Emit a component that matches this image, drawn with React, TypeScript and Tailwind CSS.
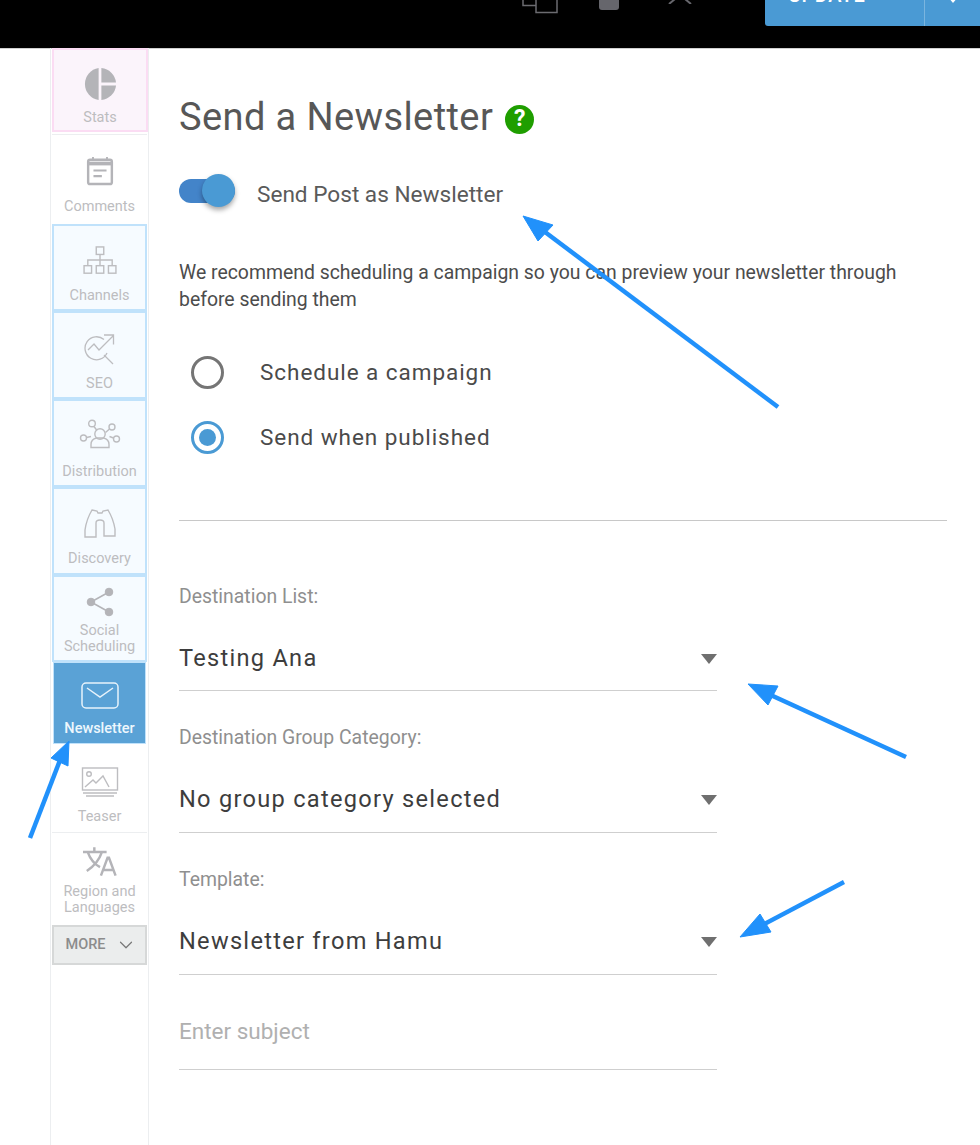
import { FunctionComponent, ReactNode } from 'react'
import { ChevronDown } from 'lucide-react'

const font = { fontFamily: 'Roboto, sans-serif' }

const StatsIcon = () => (
  <svg width="34" height="34" viewBox="0 0 34 34" fill="#b4b4b8">
    <path d="M15.6 1 A16.2 16.2 0 0 0 15.6 33 Z" />
    <path d="M18.4 1 A16.2 16.2 0 0 1 33 15.6 H18.4 Z" />
    <path d="M18.4 18.4 H33 A16.2 16.2 0 0 1 18.4 33 Z" />
  </svg>
)

const CommentsIcon = () => (
  <svg width="28" height="30" viewBox="0 0 30 32" fill="none" stroke="#b4b4b8" strokeWidth="2.6">
    <rect x="2.3" y="4" width="25.4" height="26" rx="2" />
    <path d="M2 8h26" strokeWidth="4" />
    <path d="M7.5 1v4M22.5 1v4" strokeWidth="2" />
    <path d="M8 15.5h14M8 21.5h9" strokeWidth="2.2" />
  </svg>
)

const ChannelsIcon = () => (
  <svg width="34" height="30" viewBox="0 0 36 32" fill="none" stroke="#bdbdc0" strokeWidth="1.5">
    <rect x="14" y="1" width="8" height="8" />
    <rect x="1" y="21" width="8" height="8" />
    <rect x="14" y="21" width="8" height="8" />
    <rect x="27" y="21" width="8" height="8" />
    <path d="M18 9v12M5 21v-6h26v6" />
  </svg>
)

const SeoIcon = () => (
  <svg width="32" height="32" viewBox="0 0 32 32" fill="none" stroke="#bdbdc0" strokeWidth="1.3">
    <path d="M20 6.500A11.500 11.500 0 1 0 23 20" />
    <path d="M4 17l6-6 5 6L29 3M20 2h9.500v9.500" />
    <path d="M20 22l9 9" />
  </svg>
)

const DistributionIcon = () => (
  <svg width="42" height="30" viewBox="0 0 42 30" fill="none" stroke="#bdbdc0" strokeWidth="1.4">
    <circle cx="13" cy="4.5" r="3.3" />
    <circle cx="33" cy="8" r="3" />
    <circle cx="4.5" cy="19" r="3" />
    <circle cx="37.5" cy="20" r="3" />
    <circle cx="21" cy="15" r="5.2" />
    <path d="M12 28.5v-3c0-4 3-6 5.5-6.5h7c2.5.5 5.5 2.5 5.5 6.500v3zM15 7.500l3 4M30.500 10l-4 3.500M7.500 18.500l4.500-1M34.500 19l-4-1.500" />
  </svg>
)

const DiscoveryIcon = () => (
  <svg width="34" height="30" viewBox="0 0 34 30" fill="none" stroke="#bdbdc0" strokeWidth="1.4">
    <path d="M9 1l5 1 1 2h4l1-2 5-1c3 5 6 13 7 19v7H21V14c0-2-1-3-4-3s-4 1-4 3v14H2v-7C3 14 6 6 9 1z" />
  </svg>
)

const ShareIcon = () => (
  <svg width="28" height="30" viewBox="0 0 28 30" fill="#b4b4b8" stroke="#b4b4b8">
    <circle cx="23" cy="5" r="3.800" />
    <circle cx="5" cy="15" r="3.800" />
    <circle cx="23" cy="25" r="3.800" />
    <path d="M23 5L5 15l18 10" fill="none" strokeWidth="1.600" />
  </svg>
)

const MailIcon = () => (
  <svg width="38" height="27" viewBox="0 0 38 27" fill="none" stroke="#e8f3fb" strokeWidth="1.500">
    <rect x="1" y="1" width="36" height="25" rx="4" />
    <path d="M6 6l13 9 13-9" />
  </svg>
)

const TeaserIcon = () => (
  <svg width="38" height="30" viewBox="0 0 38 30" fill="none" stroke="#bdbdc0" strokeWidth="1.400">
    <rect x="1.500" y="1" width="35" height="22" />
    <circle cx="8" cy="7" r="2.300" />
    <path d="M4 20l8-7 3 3 7-7 6 11M2 26h34M5 29h28" />
  </svg>
)

const TranslateIcon = () => (
  <svg width="34" height="31" viewBox="0 0 36 32" fill="none" stroke="#b4b4b8" strokeWidth="2.600">
    <path d="M0 6h25M12 1v5M5 6q4 11 13 16M20 6q-4 12-16 20" />
    <path d="M19 31l7-19h1.500l7 19M21.500 25h11" />
  </svg>
)

const SideItem: FunctionComponent<{
  icon: ReactNode
  label: ReactNode
  box: string
  gap?: string
  text?: string
}> = ({ icon, label, box, gap = 'mt-[9px]', text = 'text-[#bdbdbf]' }) => (
  <div className={`flex flex-col items-center ${box}`}>
    <div className="h-[36px] flex items-center justify-center">{icon}</div>
    <div className={`text-[14.500px] leading-[16px] text-center ${gap} ${text}`}>{label}</div>
  </div>
)

const blue = 'border-2 border-[#c0e2fb] bg-[#f6fbff] mx-[1px]'

const Sidebar = () => (
  <aside className="ml-[50px] w-[99px] border-x border-[#eceef0] shrink-0">
    <SideItem icon={<StatsIcon />} label="Stats" gap="mt-[8px]" box="h-[84px] pt-[16px] border-2 border-[#fbdcf3] bg-[#fbf4fb] ml-[1px] mb-[2px]" />
    <SideItem icon={<CommentsIcon />} label="Comments" gap="mt-[10px]" box="h-[90px] pt-[18px] border-t border-[#eceef0] mx-[1px]" />
    <SideItem icon={<ChannelsIcon />} label="Channels" box={`h-[87px] pt-[17px] ${blue}`} />
    <SideItem icon={<SeoIcon />} label="SEO" box={`h-[88px] pt-[18px] ${blue}`} />
    <SideItem icon={<DistributionIcon />} label="Distribution" gap="mt-[12px]" box={`h-[88px] pt-[15px] ${blue}`} />
    <SideItem icon={<DiscoveryIcon />} label="Discovery" box={`h-[88px] pt-[17px] ${blue}`} />
    <SideItem
      icon={<ShareIcon />}
      label={<>Social<br />Scheduling</>}
      gap="mt-[3px]"
      box={`h-[87px] pt-[7px] ${blue}`}
    />
    <SideItem
      icon={<MailIcon />}
      label="Newsletter"
      gap="mt-[8px]"
      box="h-[82px] pt-[14px] bg-[#5aa2d6] border border-[#c0e2fb] mx-[2px] font-medium"
      text="text-[#eef7fd]"
    />
    <SideItem icon={<TeaserIcon />} label="Teaser" box="h-[89px] pt-[20px] border-b border-[#eceef0] mx-[1px]" />
    <div className="h-[92px] flex flex-col items-center text-[#bdbdbf] pt-[13px]">
      <TranslateIcon />
      <div className="text-[14.500px] leading-[16px] text-center mt-[7px]">Region and<br />Languages</div>
    </div>
    <div className="h-[40px] border-2 border-[#d6d8d8] bg-[#ebeded] mx-[1px] pl-[3px] flex items-center justify-center gap-[9px] text-[#8c8c8c] text-[14.500px] font-medium">
      MORE
      <ChevronDown size={22} strokeWidth={1.300} color="#777" />
    </div>
  </aside>
)

const SelectField: FunctionComponent<{ label: string; value: string; top: string; box: string }> = ({ label, value, top, box }) => (
  <div className={`w-[538px] ${top}`}>
    <div className="text-[19.400px] leading-[20px] text-[#8f8f8f]">{label}</div>
    <div className={`flex items-center justify-between border-b border-[#cfcfcf] pb-[4px] ${box}`}>
      <span className="text-[23.600px] tracking-[1.280px] text-[#3d3d3d]">{value}</span>
      <span className="w-0 h-0 border-x-[8px] border-x-transparent border-t-[10px] border-t-[#6f6f6f]" />
    </div>
  </div>
)

const Radio: FunctionComponent<{ checked?: boolean; label: string }> = ({ checked, label }) => (
  <div className="flex items-center h-[33px] pl-[12px]">
    <span className={`w-[33px] h-[33px] rounded-full border-[3.500px] flex items-center justify-center ${checked ? 'border-[#4a9ad4]' : 'border-[#757575]'}`}>
      {checked && <span className="w-[17px] h-[17px] rounded-full bg-[#4a9ad4]" />}
    </span>
    <span className="ml-[36px] text-[22.500px] tracking-[0.950px] text-[#4a4a4a]">{label}</span>
  </div>
)

const Arrows = () => (
  <svg className="absolute left-0 top-0 pointer-events-none" width="980" height="1145" fill="#2191fb" stroke="#2191fb">
    <path d="M778 407L537 226" strokeWidth="4.500" />
    <path d="M523 216L553 225L538 241Z" />
    <path d="M906 757L762 691" strokeWidth="4.500" />
    <path d="M748 684L778 686L768 705Z" />
    <path d="M844 882L755 929" strokeWidth="4.500" />
    <path d="M740 937L760 914L771 932Z" />
    <path d="M30 838L62 755" strokeWidth="4.500" />
    <path d="M69 741L68 766L51 758Z" />
  </svg>
)

// window controls are cut off by the top edge of the screenshot
const TopIcons = () => (
  <>
    <svg className="mb-[12px]" width="36" height="15" viewBox="0 0 36 15" fill="none" stroke="#6b6b70" strokeWidth="1.500">
      <path d="M1 -5V6.500H14" />
      <path d="M14 -5V13.500H35V-5" />
    </svg>
    <svg className="ml-[41px] mb-[16px]" width="20" height="11" viewBox="0 0 20 11" fill="#66666c">
      <path d="M0 0H20V8a3 3 0 0 1-3 3H3a3 3 0 0 1-3-3Z" />
    </svg>
    <svg className="ml-[49px] mr-[73px] mb-[22px]" width="24" height="5" viewBox="0 0 24 5" fill="none" stroke="#66666c" strokeWidth="2">
      <path d="M7 0L1 5M17 0l6 5" />
    </svg>
  </>
)

export default function App() {
  return (
    <div className="relative w-[980px] h-[1145px] overflow-hidden bg-white" style={font}>
      <header className="h-[48px] bg-black shadow-[0_1px_0_#d0d0d0] flex items-end justify-end pb-[22px] overflow-hidden">
        <TopIcons />
        <div className="flex h-[60px] w-[215px] shrink-0 bg-[#4a9ad4] rounded-bl-[3px] text-white">
          <div className="w-[160px] pl-[23px] text-[20px] font-medium tracking-[0.500px] pt-[19px] leading-[20px] border-r border-[#7ab5df]">UPDATE</div>
          <div className="flex-1 flex justify-center items-end pb-[23px]">
            <span className="w-0 h-0 border-x-[5px] border-x-transparent border-t-[6px] border-t-white" />
          </div>
        </div>
      </header>
      <div className="flex h-[1097px]">
        <Sidebar />
        <main className="ml-[30px] flex-1 pr-[33px]">
          <div className="flex items-center mt-[43px] h-[52px]">
            <h1 className="text-[38px] tracking-[0.400px] text-[#575757]">Send a Newsletter</h1>
            <span className="ml-[12px] mt-[4px] w-[29px] h-[29px] rounded-full bg-[#1f9e00] text-white text-[23px] font-bold flex items-center justify-center">?</span>
          </div>
          <div className="flex items-center mt-[30px] h-[36px]">
            <div className="relative w-[56px] h-[24px] rounded-full bg-[#4384c9]">
              <span className="absolute right-0 top-[-5px] w-[33px] h-[33px] rounded-full bg-[#4a9ad4] shadow-[0_3px_5px_rgba(0,0,0,0.35)]" />
            </div>
            <span className="ml-[22px] mt-[8px] text-[22.600px] text-[#5a5a5a]">Send Post as Newsletter</span>
          </div>
          <p className="mt-[50px] text-[19.400px] leading-[27px] text-[#4c4c4c] w-[730px]">
            We recommend scheduling a campaign so you can preview your newsletter through before sending them
          </p>
          <div className="mt-[43px] flex flex-col gap-[32px]">
            <Radio label="Schedule a campaign" />
            <Radio checked label="Send when published" />
          </div>
          <div className="mt-[66px] border-t border-[#c8c8c8]" />
          <SelectField label="Destination List:" value="Testing Ana" top="mt-[66px]" box="h-[60px] mt-[24px]" />
          <SelectField label="Destination Group Category:" value="No group category selected" top="mt-[37px]" box="h-[61px] mt-[24px]" />
          <SelectField label="Template:" value="Newsletter from Hamu" top="mt-[37px]" box="h-[61px] mt-[24px]" />
          <div className="w-[538px] mt-[35px] h-[60px] border-b border-[#cfcfcf] text-[22.500px] leading-[42px] text-[#b0b0b0]">Enter subject</div>
        </main>
      </div>
      <Arrows />
    </div>
  )
}
